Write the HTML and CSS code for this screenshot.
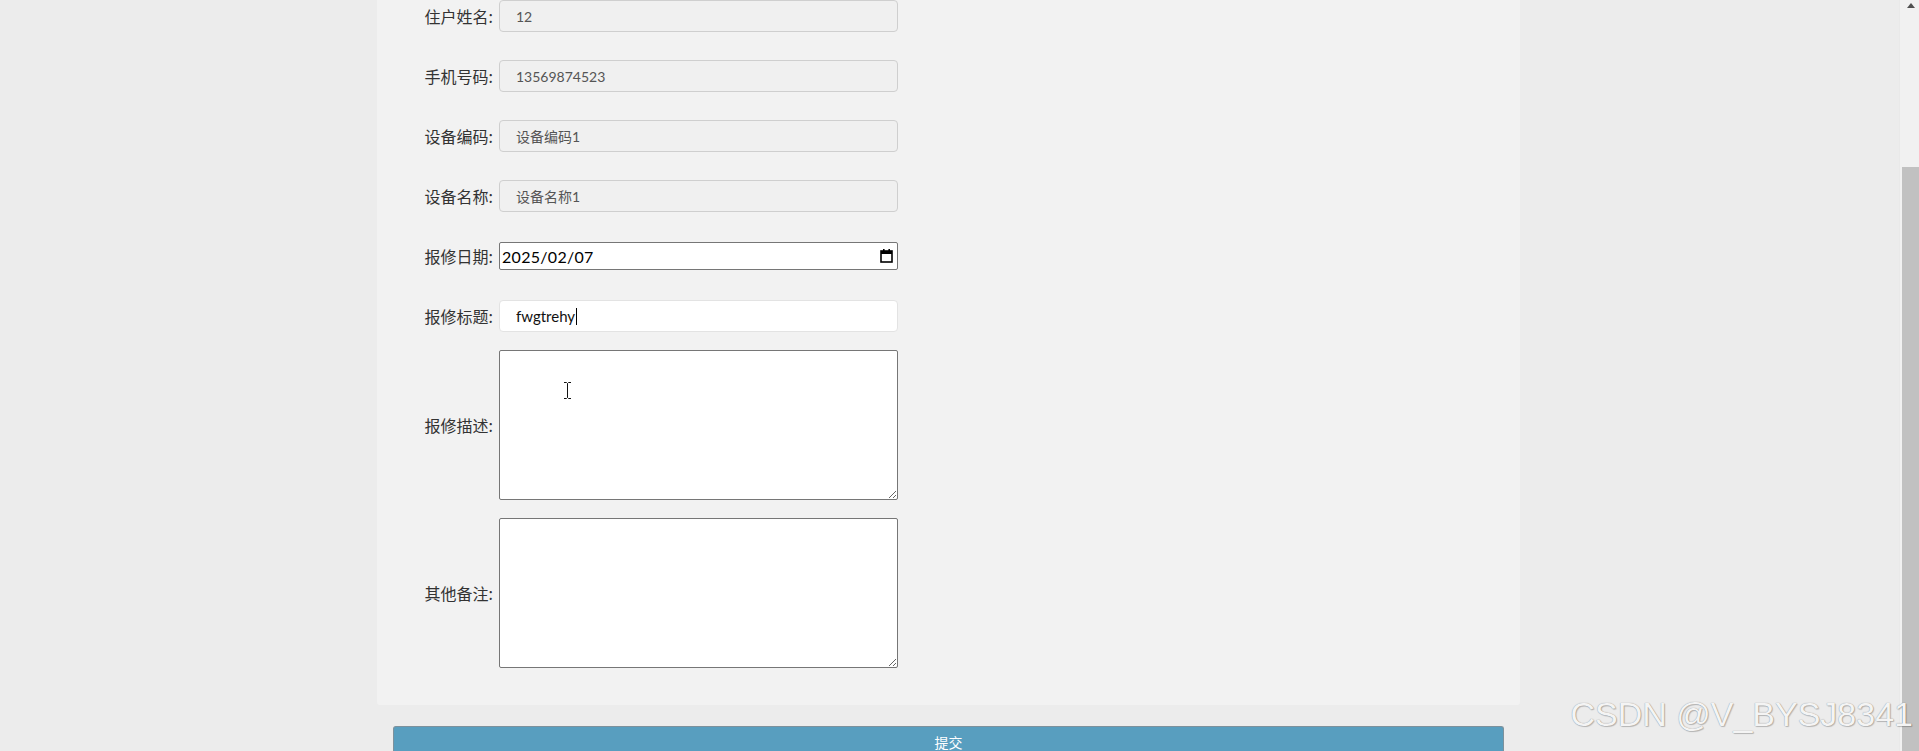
FILE: index.html
```html
<!DOCTYPE html>
<html lang="zh-CN">
<head>
  <meta charset="UTF-8">
  <meta name="viewport" content="width=device-width, initial-scale=1.0">
  <title>报修申请</title>
  <link rel="stylesheet" href="styles.css">
</head>
<body>
  <div class="screen">
    <main class="page">
      <div class="panel">
        <form class="repair-form">
          <div class="fields">
            <div class="form-item">
              <label>住户姓名:</label>
              <input class="ipt ipt-readonly" type="text" value="12" readonly>
            </div>
            <div class="form-item">
              <label>手机号码:</label>
              <input class="ipt ipt-readonly" type="text" value="13569874523" readonly>
            </div>
            <div class="form-item">
              <label>设备编码:</label>
              <input class="ipt ipt-readonly" type="text" value="设备编码1" readonly>
            </div>
            <div class="form-item">
              <label>设备名称:</label>
              <input class="ipt ipt-readonly" type="text" value="设备名称1" readonly>
            </div>
            <div class="form-item">
              <label>报修日期:</label>
              <div class="date-box">
                <span class="date-value">2025/02/07</span>
                <svg class="date-icon" width="13" height="14" viewBox="0 0 13 14">
                  <rect x="1" y="2" width="11" height="11" fill="none" stroke="#000" stroke-width="1.6"/>
                  <rect x="1" y="2" width="11" height="3" fill="#000"/>
                  <rect x="3" y="0" width="1.6" height="3" fill="#000"/>
                  <rect x="8.4" y="0" width="1.6" height="3" fill="#000"/>
                </svg>
              </div>
            </div>
            <div class="form-item">
              <label>报修标题:</label>
              <div class="title-box">
                <input class="ipt ipt-title" type="text" value="fwgtrehy"><span class="caret"></span>
              </div>
            </div>
          </div>
          <div class="notes">
            <div class="form-item">
              <label>报修描述:</label>
              <div class="area-wrap">
                <textarea class="area"></textarea>
                <!-- text-select pointer hovering the box -->
                <svg class="ibeam" width="9" height="17" viewBox="0 0 9 17">
                  <path d="M1 0.5h2.5l1 1 1-1H8M4.5 1.5v14M1 16.5h2.5l1-1 1 1H8" fill="none" stroke="#111" stroke-width="1"/>
                </svg>
              </div>
            </div>
            <div class="form-item">
              <label>其他备注:</label>
              <div class="area-wrap">
                <textarea class="area"></textarea>
              </div>
            </div>
          </div>
        </form>
      </div>
      <button class="submit-btn" type="button">提交</button>
    </main>
    <div class="scrollbar">
      <div class="scroll-up"><span class="arrow"></span></div>
      <div class="scroll-thumb"></div>
    </div>
    <div class="watermark">CSDN @V_BYSJ8341</div>
  </div>
</body>
</html>
```

FILE: styles.css
```css
html, body {
  margin: 0;
  padding: 0;
}
body {
  background: #ececec;
  font-family: Lato, 'Noto Sans CJK SC', sans-serif;
  color: #333;
}
.screen {
  display: flex;
  height: 100vh;
  overflow: hidden;
  position: relative;
}
.page {
  flex: 1;
  overflow: hidden;
  padding-left: 377px;
}
.panel {
  width: 1143px;
  background: #f2f2f2;
  border-radius: 0 0 3px 3px;
  padding: 0 0 37px;
}
.fields {
  display: flex;
  flex-direction: column;
  gap: 28px;
}
.notes {
  display: flex;
  flex-direction: column;
  gap: 18px;
  margin-top: 18px;
}
.form-item {
  display: flex;
  align-items: center;
  min-height: 32px;
}
.form-item label {
  width: 116px;
  margin-right: 6px;
  text-align: right;
  font-family: 'Noto Sans CJK SC', sans-serif;
  font-size: 16px;
  color: #333;
}
.ipt {
  box-sizing: border-box;
  width: 399px;
  height: 32px;
  padding: 0 16px;
  border: 1px solid #cfcfcf;
  border-radius: 4px;
  font-family: Lato, 'Noto Sans CJK SC', sans-serif;
  font-size: 14px;
  outline: none;
}
.ipt-readonly {
  background: #f0f0f0;
  color: #555;
}
.title-box {
  display: flex;
  align-items: center;
  position: relative;
}
.ipt-title {
  background: #fff;
  border-color: #e3e3e3;
  color: #111;
  font-size: 15px;
}
.caret {
  position: absolute;
  left: 77px;
  top: 8px;
  width: 1px;
  height: 17px;
  background: #000;
}
.date-box {
  box-sizing: border-box;
  width: 399px;
  height: 28px;
  display: flex;
  align-items: center;
  justify-content: space-between;
  padding: 0 4px 0 2px;
  background: #fff;
  border: 1px solid #767676;
  border-radius: 2px;
}
.date-value {
  font-size: 16px;
  color: #000;
  letter-spacing: 0.3px;
}
.date-icon {
  display: block;
}
.area-wrap {
  position: relative;
}
.area {
  box-sizing: border-box;
  display: block;
  width: 399px;
  height: 150px;
  background: #fff;
  border: 1px solid #767676;
  border-radius: 2px;
  margin: 0;
}
.ibeam {
  position: absolute;
  left: 64px;
  top: 32px;
}
.submit-btn {
  display: block;
  box-sizing: border-box;
  width: 1111px;
  height: 30px;
  margin: 21px 0 0 16px;
  padding: 0;
  background: #589ebf;
  border: 1px solid #7d919c;
  border-bottom: none;
  border-radius: 3px 3px 0 0;
  color: #fff;
  font-family: 'Noto Sans CJK SC', sans-serif;
  font-size: 14px;
  line-height: 28px;
}
.scrollbar {
  width: 19px;
  background: #f1f1f1;
  border-left: 1px solid #e9e9e9;
  display: flex;
  flex-direction: column;
  align-items: flex-end;
}
.scroll-up {
  width: 17px;
  height: 17px;
  display: flex;
  justify-content: center;
  padding-top: 3px;
  box-sizing: border-box;
}
.arrow {
  width: 0;
  height: 0;
  border-left: 4.5px solid transparent;
  border-right: 4.5px solid transparent;
  border-bottom: 5px solid #505050;
}
.scroll-thumb {
  width: 17px;
  margin-top: 150px;
  flex: 1;
  background: #c1c1c1;
}
.watermark {
  position: absolute;
  right: 6px;
  bottom: 17px;
  font-family: 'Liberation Sans', Arial, sans-serif;
  font-size: 34px;
  color: #f4f4f4;
  text-shadow: 0 0 1px rgba(0, 0, 0, 0.45), 1px 1px 1px rgba(0, 0, 0, 0.2);
  pointer-events: none;
}
```
